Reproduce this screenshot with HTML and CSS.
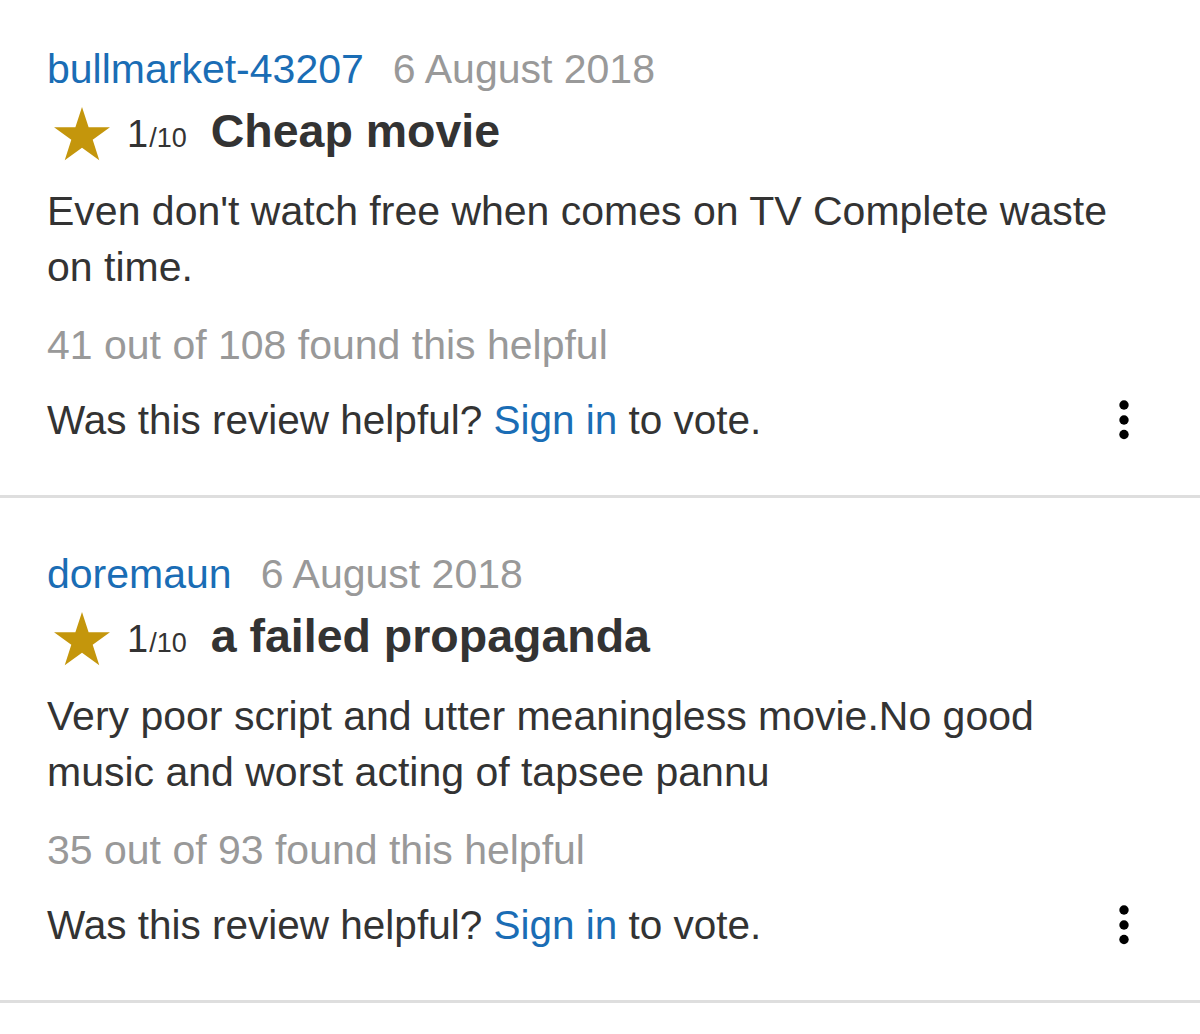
FILE: index.html
```html
<!DOCTYPE html>
<html lang="en">
<head>
<meta charset="utf-8">
<title>Reviews</title>
<link rel="stylesheet" href="styles.css">
</head>
<body>
<div class="reviews">
  <div class="review">
    <div class="meta">
      <a class="user" href="#">bullmarket-43207</a>
      <span class="date">6 August 2018</span>
    </div>
    <div class="headline">
      <svg class="star" viewBox="0 0 56 54" width="56" height="54"><polygon points="28,0 34.61,20.31 55.96,20.32 38.69,32.87 45.28,53.18 28,40.64 10.72,53.18 17.31,32.87 0.04,20.32 21.39,20.31"/></svg>
      <span class="rating">1<span class="scale">/10</span></span>
      <span class="title">Cheap movie</span>
    </div>
    <p class="body">Even don't watch free when comes on TV Complete waste on time.</p>
    <p class="helpful">41 out of 108 found this helpful</p>
    <div class="vote">
      <span>Was this review helpful? <a href="#">Sign in</a> to vote.</span>
      <svg class="kebab" viewBox="0 0 10 40" width="10" height="40"><circle cx="5" cy="5" r="4.7"/><circle cx="5" cy="20" r="4.7"/><circle cx="5" cy="34.5" r="4.7"/></svg>
    </div>
  </div>
  <div class="review">
    <div class="meta">
      <a class="user" href="#">doremaun</a>
      <span class="date">6 August 2018</span>
    </div>
    <div class="headline">
      <svg class="star" viewBox="0 0 56 54" width="56" height="54"><polygon points="28,0 34.61,20.31 55.96,20.32 38.69,32.87 45.28,53.18 28,40.64 10.72,53.18 17.31,32.87 0.04,20.32 21.39,20.31"/></svg>
      <span class="rating">1<span class="scale">/10</span></span>
      <span class="title">a failed propaganda</span>
    </div>
    <p class="body">Very poor script and utter meaningless movie.No good music and worst acting of tapsee pannu</p>
    <p class="helpful">35 out of 93 found this helpful</p>
    <div class="vote">
      <span>Was this review helpful? <a href="#">Sign in</a> to vote.</span>
      <svg class="kebab" viewBox="0 0 10 40" width="10" height="40"><circle cx="5" cy="5" r="4.7"/><circle cx="5" cy="20" r="4.7"/><circle cx="5" cy="34.5" r="4.7"/></svg>
    </div>
  </div>
</div>
</body>
</html>
```
FILE: styles.css
```css
html, body {
  margin: 0;
  padding: 0;
  background: #ffffff;
}
body {
  font-family: "Liberation Sans", Arial, Helvetica, sans-serif;
  color: #333333;
}
a {
  color: #1a6db5;
  text-decoration: none;
}
.review {
  padding: 52px 71px 47px 47px;
  border-bottom: 3px solid #dedede;
}
.review:first-child {
  padding-top: 45px;
}
.meta {
  display: flex;
  align-items: baseline;
  gap: 29px;
  font-size: 41px;
  line-height: 48px;
}
.date {
  color: #999999;
}
.headline {
  display: flex;
  align-items: baseline;
  margin-top: 8px;
  line-height: 60px;
}
.star {
  fill: #c4960c;
  align-self: center;
  margin-left: 7px;
  margin-right: 17px;
  position: relative;
  top: -1px;
}
.rating {
  font-size: 38px;
  color: #333333;
}
.scale {
  font-size: 27px;
  margin-left: 1px;
}
.title {
  font-size: 46.5px;
  font-weight: bold;
  margin-left: 24px;
}
.body {
  margin: 15px 0 0;
  font-size: 41px;
  line-height: 56px;
}
.helpful {
  margin: 22px 0 0;
  font-size: 41px;
  line-height: 56px;
  color: #999999;
}
.vote {
  margin-top: 19px;
  display: flex;
  justify-content: space-between;
  align-items: center;
  font-size: 40.5px;
  line-height: 56px;
}
.kebab {
  fill: #000000;
}
```
